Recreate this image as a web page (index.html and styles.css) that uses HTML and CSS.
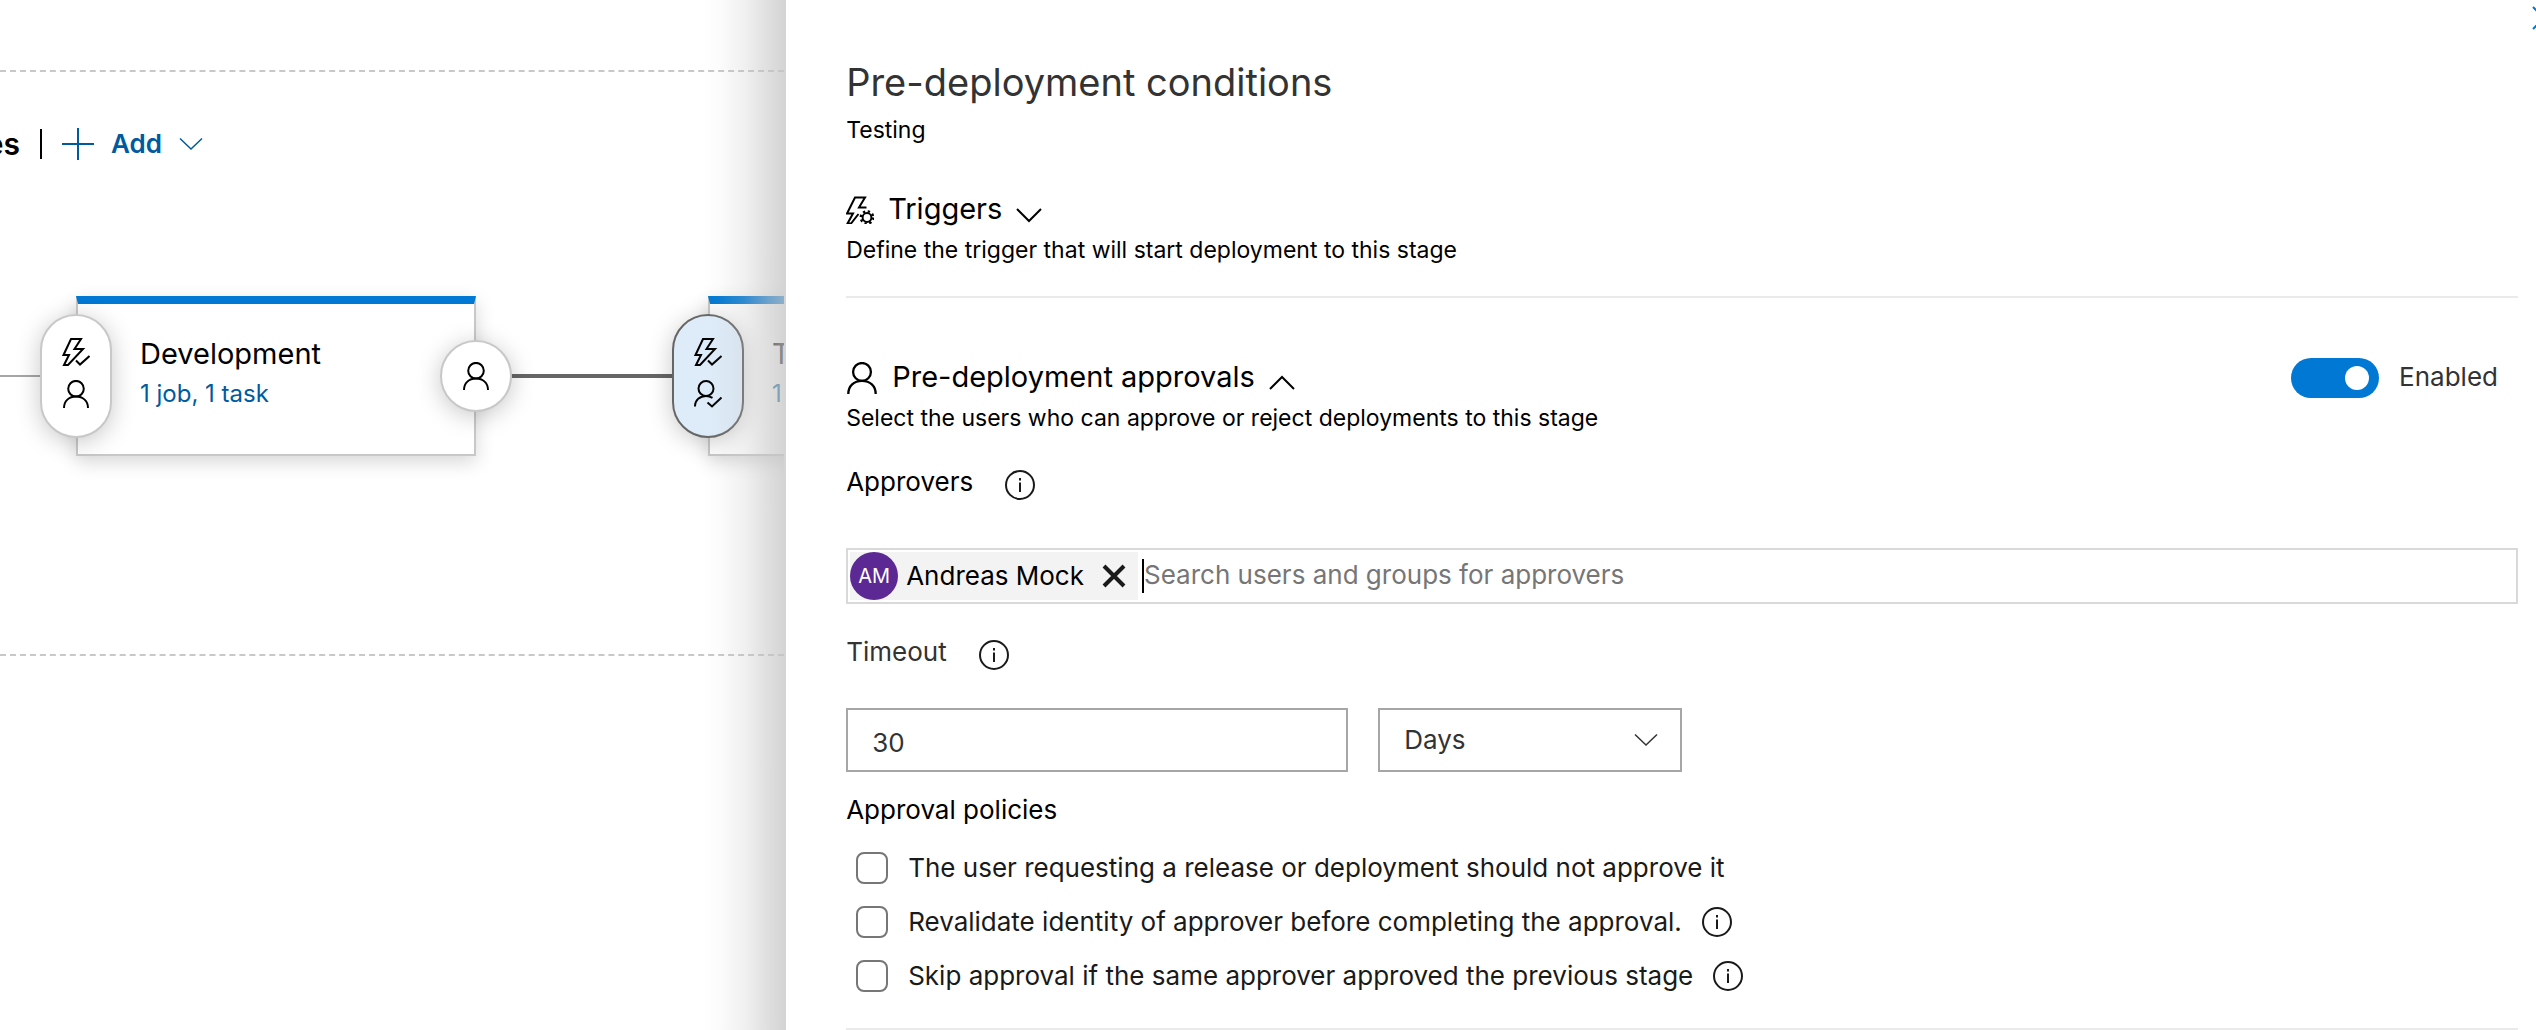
FILE: index.html
```html
<!DOCTYPE html>
<html lang="en">
<head>
<meta charset="utf-8">
<title>Pre-deployment conditions</title>
<link rel="stylesheet" href="styles.css">
</head>
<body>
<svg class="sprite" aria-hidden="true">
  <symbol id="bolt-check" viewBox="0 0 28 28">
    <path d="M9 1H19L12.500 11H21L6 27H2L7 17H1.500Z"/>
    <path d="M14 22.500L18 26.500L27.500 18"/>
  </symbol>
  <symbol id="person" viewBox="0 0 28 28">
    <circle cx="14" cy="8.700" r="7.800"/>
    <path d="M2 28C2 21 7 16.500 14 16.500S26 21 26 28"/>
  </symbol>
  <symbol id="person-check" viewBox="0 0 28 28">
    <circle cx="12" cy="8.500" r="7.500"/>
    <path d="M1 26.500C1 20 6 16 12 16Q15.500 16 18.500 17.800"/>
    <path d="M13.500 22.500L18 26.500L27.500 17.500"/>
  </symbol>
  <symbol id="bolt-gear" viewBox="0 0 28 28">
    <path d="M20.500 11.500H13L19 1.500H9L1 17.500H7L1.500 27.500H5L12.500 18"/>
    <circle cx="21" cy="21.500" r="4.400"/>
    <circle cx="21" cy="21.500" r="6.200" stroke-dasharray="2.300 2.570" stroke-width="2.400"/>
  </symbol>
  <symbol id="info" viewBox="0 0 30 30">
    <circle cx="15" cy="15" r="14"/>
    <path d="M15 12.500V22M15 8V10.500"/>
  </symbol>
</svg>
<div class="app">
  <main class="canvas">
    <section class="stages">
      <header class="stages-header">
        <h2 class="stages-title">Stages</h2>
        <span class="divider"></span>
        <button class="add" type="button">
          <svg class="icon add-plus" viewBox="0 0 32 32"><path d="M16 0V32M0 16H32"/></svg>
          <span>Add</span>
          <svg class="icon chevron-sm" viewBox="0 0 24 14"><path stroke-width="1.500" d="M1 1.500L12 12L23 1.500"/></svg>
        </button>
      </header>
      <div class="connector connector-in"></div>
      <div class="connector connector-mid"></div>
      <article class="stage stage-dev">
        <h3 class="stage-name">Development</h3>
        <a class="stage-link" href="#">1 job, 1 task</a>
      </article>
      <article class="stage stage-test">
        <h3 class="stage-name">Testing</h3>
        <a class="stage-link" href="#">1 job, 1 task</a>
      </article>
      <button class="gate gate-dev" type="button" aria-label="Pre-deployment conditions, Development">
        <svg class="icon glyph"><use href="#bolt-check"/></svg>
        <svg class="icon glyph"><use href="#person"/></svg>
      </button>
      <button class="gate gate-post" type="button" aria-label="Post-deployment conditions, Development">
        <svg class="icon glyph"><use href="#person"/></svg>
      </button>
      <button class="gate gate-test" type="button" aria-label="Pre-deployment conditions, Testing">
        <svg class="icon glyph"><use href="#bolt-check"/></svg>
        <svg class="icon glyph"><use href="#person-check"/></svg>
      </button>
    </section>
    <div class="fade"></div>
  </main>

  <aside class="panel">
    <button class="close" type="button" aria-label="Close">
      <svg class="icon close-icon" viewBox="0 0 24 24"><path d="M1 1L23 23M23 1L1 23"/></svg>
    </button>
    <h1 class="panel-title">Pre-deployment conditions</h1>
    <p class="note stage-label">Testing</p>

    <section class="triggers">
      <div class="section-head">
        <svg class="icon glyph"><use href="#bolt-gear"/></svg>
        <h2 class="section-title">Triggers</h2>
        <button class="expander" type="button" aria-label="Expand triggers">
          <svg class="icon chevron" viewBox="0 0 26 14"><path d="M1 1L13 13L25 1"/></svg>
        </button>
      </div>
      <p class="note">Define the trigger that will start deployment to this stage</p>
    </section>

    <section class="approvals">
      <div class="section-head">
        <svg class="icon person-lg"><use href="#person"/></svg>
        <h2 class="section-title">Pre-deployment approvals</h2>
        <button class="expander" type="button" aria-label="Collapse approvals">
          <svg class="icon chevron" viewBox="0 0 26 14"><path d="M1 13L13 1L25 13"/></svg>
        </button>
        <label class="toggle">
          <input class="switch" type="checkbox" role="switch" checked>
          <span class="toggle-text">Enabled</span>
        </label>
      </div>
      <p class="note">Select the users who can approve or reject deployments to this stage</p>

      <div class="field-label">
        <label for="approvers">Approvers</label>
        <svg class="icon info"><use href="#info"/></svg>
      </div>
      <div class="picker">
        <span class="chip">
          <span class="avatar">AM</span>
          <span class="chip-name">Andreas Mock</span>
          <button class="chip-remove" type="button" aria-label="Remove Andreas Mock">
            <svg class="icon remove-icon" viewBox="0 0 24 24"><path d="M2 2L22 22M22 2L2 22"/></svg>
          </button>
        </span>
        <span class="caret"></span>
        <input class="search" id="approvers" type="text" placeholder="Search users and groups for approvers">
      </div>

      <div class="field-label muted">
        <label for="timeout">Timeout</label>
        <svg class="icon info"><use href="#info"/></svg>
      </div>
      <div class="timeout">
        <input class="box amount" id="timeout" type="text" value="30">
        <div class="unit">
          <select class="box unit-select" aria-label="Timeout unit"><option>Days</option></select>
          <svg class="icon unit-chevron" viewBox="0 0 24 14"><path stroke-width="1.500" d="M1 1.500L12 12L23 1.500"/></svg>
        </div>
      </div>

      <fieldset class="policies">
        <legend class="policies-title">Approval policies</legend>
        <div class="policy">
          <input class="tick" type="checkbox" id="p1">
          <label for="p1">The user requesting a release or deployment should not approve it</label>
        </div>
        <div class="policy">
          <input class="tick" type="checkbox" id="p2">
          <label for="p2">Revalidate identity of approver before completing the approval.</label>
          <svg class="icon info"><use href="#info"/></svg>
        </div>
        <div class="policy">
          <input class="tick" type="checkbox" id="p3">
          <label for="p3">Skip approval if the same approver approved the previous stage</label>
          <svg class="icon info"><use href="#info"/></svg>
        </div>
      </fieldset>
    </section>
  </aside>
</div>
</body>
</html>
```
FILE: styles.css
```css
* { box-sizing: border-box; }

body {
  margin: 0;
  background: #fff;
  color: #000;
  font: 26px/32px Inter, "Liberation Sans", sans-serif;
}

h1, h2, h3, p, fieldset, legend { margin: 0; padding: 0; border: 0; font-weight: 400; }
button, input, select { margin: 0; padding: 0; border: 0; background: none; font: inherit; color: inherit; }
button { display: flex; align-items: center; }

.sprite { position: absolute; width: 0; height: 0; }
.icon { display: block; flex: none; overflow: visible; fill: none; stroke: currentColor; stroke-width: 2; }
.glyph { width: 28px; height: 28px; }

.app { display: flex; min-height: 100vh; overflow: hidden; }

/* Pipeline canvas */
.canvas { position: relative; flex: 1; min-width: 0; overflow: hidden; }

.stages {
  position: relative;
  height: 586px;
  margin: 70px 2px 0 0;
  border: dashed #c8c8c8;
  border-width: 2px 0;
  overflow: hidden;
}

.stages-header { display: flex; align-items: center; padding-top: 56px; }
.stages-title {
  display: flex;
  justify-content: flex-end;
  width: 20px;
  overflow: hidden;
  font-size: 30px;
  font-weight: 600;
}
.divider { width: 2px; height: 30px; margin: 0 20px; background: #000; }
.add { gap: 17px; color: #005a9e; font-weight: 600; }
.add-plus { width: 32px; height: 32px; }
.chevron-sm { width: 24px; height: 14px; }

.connector { position: absolute; }
.connector-in { left: 0; top: 303px; width: 60px; height: 2px; background: #a6a6a6; }
.connector-mid { left: 476px; top: 302px; width: 220px; height: 4px; background: #666; }

.stage {
  position: absolute;
  top: 224px;
  width: 400px;
  height: 160px;
  padding: 30px 0 0 62px;
  background: #fff;
  border: 2px solid #c8c8c8;
  border-top: 8px solid #0078d4;
  box-shadow: 0 6px 18px rgba(0, 0, 0, .16);
}
.stage-dev { left: 76px; }
.stage-test { left: 708px; }
.stage-name { font-size: 29px; line-height: 40px; white-space: nowrap; }
.stage-link { display: block; font-size: 24px; line-height: 40px; color: #005a9e; text-decoration: none; white-space: nowrap; }

.gate {
  position: absolute;
  flex-direction: column;
  justify-content: center;
  gap: 14px;
  width: 72px;
  height: 124px;
  padding-bottom: 6px;
  background: #fff;
  border: 2px solid #c8c8c8;
  border-radius: 36px;
  box-shadow: 0 4px 24px rgba(0, 0, 0, .22);
}
.gate-dev { left: 40px; top: 242px; }
.gate-post { left: 440px; top: 268px; height: 72px; padding-bottom: 0; }
.gate-test { left: 672px; top: 242px; background: #deecf9; border-color: #666; }

.fade {
  position: absolute;
  inset: 0 0 0 auto;
  width: 84px;
  background: linear-gradient(to right,
    rgba(196, 196, 196, 0) 0%,
    rgba(196, 196, 196, .05) 20%,
    rgba(196, 196, 196, .24) 50%,
    rgba(196, 196, 196, .54) 78%,
    rgba(196, 196, 196, .74) 100%);
}

/* Side panel */
.panel { position: relative; flex: none; width: 69%; padding: 58px 18px 0 60px; background: #fff; overflow: hidden; }
.close { position: absolute; top: 6px; right: -20px; color: #0078d4; }
.close-icon { width: 24px; height: 24px; }

.panel-title { font-size: 38px; line-height: 48px; color: #333; }
.note { font-size: 23px; }
.stage-label { margin-top: 8px; }

.triggers { padding: 44px 0 30px; border-bottom: 2px solid #eaeaea; }
.approvals { padding: 60px 0 36px; border-bottom: 2px solid #eaeaea; }

.section-head { display: flex; align-items: center; gap: 14px; height: 40px; margin-bottom: 4px; }
.section-title { padding-bottom: 2px; font-size: 29px; line-height: 38px; }
.expander { padding-top: 10px; }
.chevron { width: 26px; height: 14px; }
.person-lg { width: 32px; height: 32px; }

.toggle { display: flex; align-items: center; gap: 20px; margin-left: auto; padding-right: 20px; color: #333; }
.toggle-text { padding-bottom: 2px; }
.switch {
  display: flex;
  align-items: center;
  justify-content: flex-end;
  width: 88px;
  height: 40px;
  padding: 0 10px;
  appearance: none;
  background: #0078d4;
  border-radius: 20px;
}
.switch::before { content: ""; width: 24px; height: 24px; border-radius: 50%; background: #fff; }

.field-label { display: flex; gap: 32px; height: 34px; margin-top: 32px; }
.field-label .info { align-self: flex-end; }
.muted > label { color: #333; }
.info { width: 30px; height: 30px; color: #1a1a1a; }

.picker { display: flex; align-items: center; height: 56px; margin-top: 48px; padding: 2px; border: 2px solid #d9d9d9; }
.chip { display: flex; align-items: center; height: 48px; padding-right: 12px; background: #f3f3f3; }
.avatar {
  width: 48px;
  height: 48px;
  margin-right: 8px;
  border-radius: 50%;
  background: #5c2893;
  color: #fff;
  font-size: 20px;
  line-height: 48px;
  text-align: center;
}
.chip-remove { margin-left: 18px; color: #1a1a1a; }
.remove-icon { width: 24px; height: 24px; stroke-width: 4; }
.caret { width: 2px; height: 34px; margin-left: 4px; background: #000; }
.search { flex: 1; min-width: 0; height: 48px; padding-bottom: 4px; outline: 0; }
.search::placeholder { color: #767676; opacity: 1; }

.timeout { display: flex; gap: 30px; margin-top: 38px; color: #333; }
.box { height: 64px; border: 2px solid #a6a6a6; background: #fff; }
.amount { width: 502px; padding: 4px 24px 0; }
.unit { display: grid; align-items: center; width: 304px; }
.unit-select { grid-area: 1 / 1; width: 100%; padding: 0 24px; appearance: none; }
.unit-chevron { grid-area: 1 / 1; justify-self: end; width: 24px; height: 14px; margin-right: 24px; color: #333; pointer-events: none; }

.policies { margin-top: 22px; min-width: 0; }
.policies-title { margin-bottom: 26px; }
.policy { display: flex; align-items: center; gap: 20px; padding-left: 10px; color: #1a1a1a; }
.policy + .policy { margin-top: 22px; }
.policy .info { margin: -2px 0; }
.tick { flex: none; width: 32px; height: 32px; appearance: none; border: 2px solid #767676; border-radius: 8px; background: #fff; }
```
